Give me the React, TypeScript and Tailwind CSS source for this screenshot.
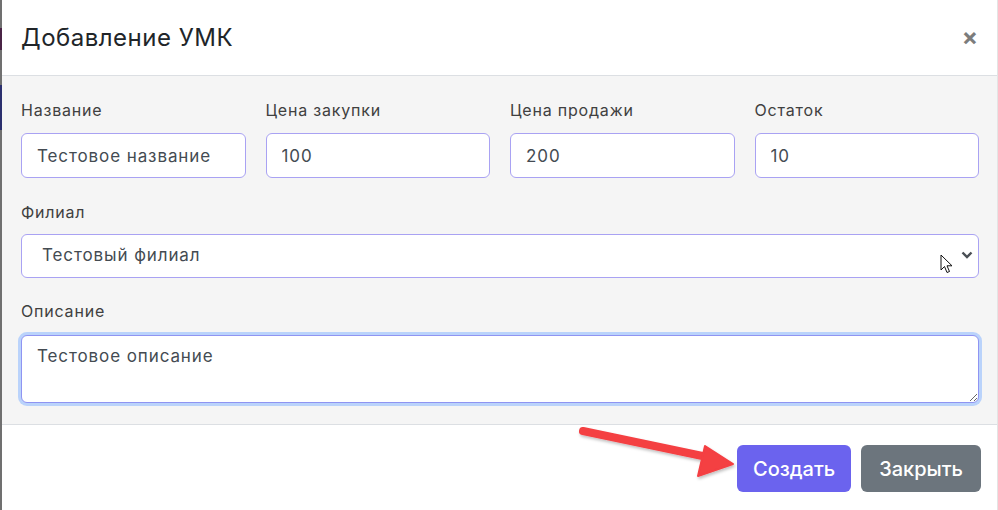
import React from 'react';

const TOP_FIELDS = [
  { label: 'Название', value: 'Тестовое название' },
  { label: 'Цена закупки', value: '100' },
  { label: 'Цена продажи', value: '200' },
  { label: 'Остаток', value: '10' },
];

const labelCls = 'block h-[24px] text-[16px] leading-[24px] tracking-[0.8px] text-[#404040]';
const inputCls =
  'h-[45px] w-full rounded-[6px] border border-[#a9a2f3] bg-white px-[15px] text-[17px] tracking-[0.9px] text-[#444b52] outline-none';

export default function App() {
  return (
    <div
      className="relative flex h-[510px] w-[998px] overflow-hidden bg-white"
      style={{ fontFamily: 'Inter, "Noto Sans", sans-serif' }}
    >
      {/* backdrop edge */}
      <div className="flex w-[2px] flex-col bg-[#707070]">
        <div className="mt-[28px] h-[22px] bg-[#4a2446]" />
        <div className="mt-[35px] h-[45px] bg-[#2b2f6e]" />
      </div>

      <div className="flex flex-1 flex-col border-r border-[#e4e4e4]">
        {/* header */}
        <div className="flex h-[76px] items-center justify-between border-b border-[#dcdfe3] pl-[19px] pr-[19px]">
          <h1 className="text-[24px] font-normal tracking-[0.5px] text-[#212529]">Добавление УМК</h1>
          <button className="pb-[2px] text-[24px] font-bold leading-none text-[#7c7c7c]">×</button>
        </div>

        {/* body */}
        <div className="bg-[#f5f5f5] pb-[21px] pl-[19px] pt-[22px]">
          <div className="w-[958px]">
            <div className="grid grid-cols-4 gap-x-[20px]">
              {TOP_FIELDS.map((f) => (
                <div key={f.label}>
                  <label className={labelCls}>{f.label}</label>
                  <input readOnly defaultValue={f.value} className={`mt-[11px] ${inputCls}`} />
                </div>
              ))}
            </div>

            <label className={`mt-[22px] ${labelCls}`}>Филиал</label>
            <div className="relative mt-[10px]">
              <select
                defaultValue="1"
                className="h-[44px] w-full appearance-none rounded-[6px] border border-[#a9a2f3] bg-white pl-[20px] text-[17px] tracking-[0.9px] text-[#444b52] outline-none"
              >
                <option value="1">Тестовый филиал</option>
              </select>
              <svg
                className="pointer-events-none absolute right-[6px] top-[16px]"
                width="12"
                height="10"
                viewBox="0 0 12 10"
              >
                <path d="M1.5 2.5 L6 7 L10.5 2.5" fill="none" stroke="#4a4f55" strokeWidth="2.4" />
              </svg>
              {/* mouse cursor */}
              <svg
                className="pointer-events-none absolute left-[919px] top-[20px]"
                width="14"
                height="22"
                viewBox="0 0 14 22"
              >
                <path
                  d="M1 1 L1 16 L4.5 12.5 L7 18.5 L9.5 17.5 L7 11.8 L12 11.8 Z"
                  fill="white"
                  stroke="#111"
                  strokeWidth="1"
                  strokeLinejoin="round"
                />
              </svg>
            </div>

            <label className={`mt-[21px] ${labelCls}`}>Описание</label>
            <textarea
              readOnly
              defaultValue="Тестовое описание"
              className="mt-[12px] block h-[68px] w-full rounded-[6px] border border-[#8f94f2] bg-white px-[15px] py-[8px] text-[17px] leading-[24px] tracking-[0.9px] text-[#444b52] shadow-[0_0_0_3px_#bad3fb] outline-none"
            />
          </div>
        </div>

        {/* footer */}
        <div className="flex flex-1 items-start justify-end gap-[10px] border-t border-[#dcdfe3] pr-[16px] pt-[20px]">
          <button className="h-[47px] rounded-[6px] bg-[#6b63ee] px-[16px] text-[20px] font-medium text-white">
            Создать
          </button>
          <button className="h-[47px] rounded-[6px] bg-[#6c757d] px-[18px] text-[20px] font-medium text-white">
            Закрыть
          </button>
        </div>
      </div>

      {/* annotation arrow */}
      <svg className="pointer-events-none absolute left-0 top-0" width="998" height="510">
        <defs>
          <filter id="sh" x="-10%" y="-50%" width="120%" height="200%">
            <feDropShadow dx="1" dy="2" stdDeviation="1.5" floodColor="#000" floodOpacity="0.25" />
          </filter>
        </defs>
        <g filter="url(#sh)">
          <line x1="583" y1="431" x2="712" y2="458" stroke="#f43f43" strokeWidth="8" strokeLinecap="round" />
          <path d="M705 446 L733 464 L698 476 Z" fill="#f43f43" stroke="#f43f43" strokeWidth="2" strokeLinejoin="round" />
        </g>
      </svg>
    </div>
  );
}
